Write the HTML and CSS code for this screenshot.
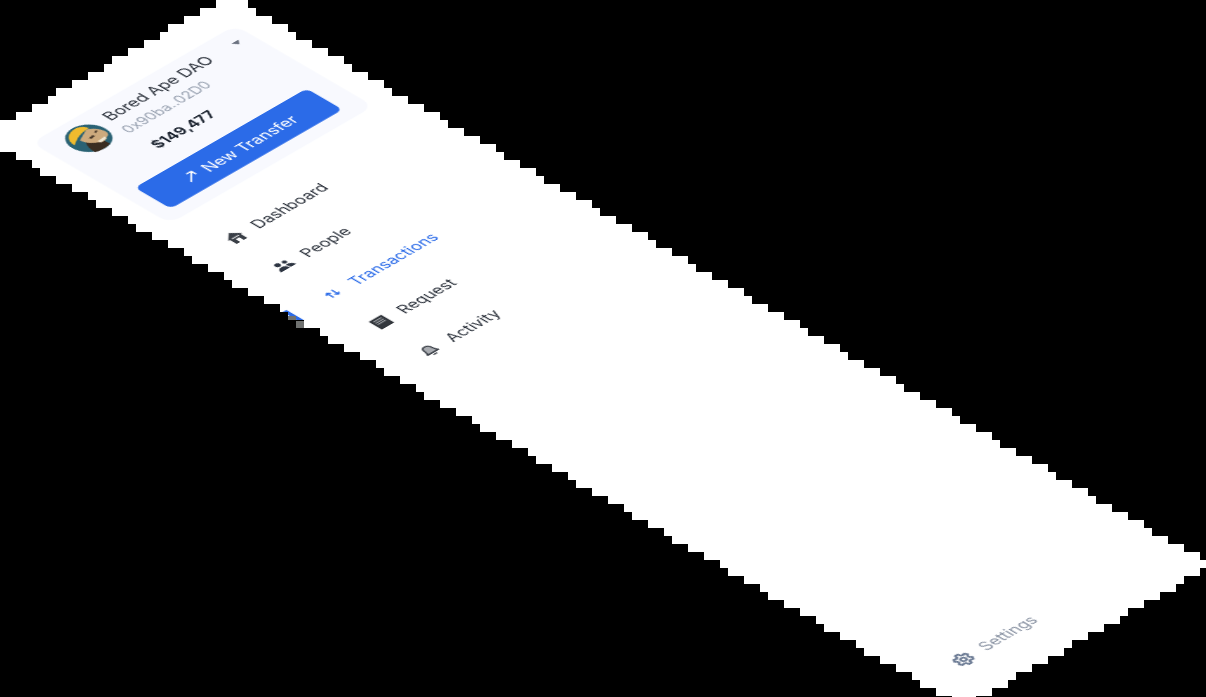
FILE: index.html
```html
<!DOCTYPE html>
<html lang="en">
<head>
    <meta charset="UTF-8">
    <meta name="viewport" content="width=device-width, initial-scale=1.0">
    <title>Sidebar</title>
    <link rel="stylesheet" href="styles.css">
</head>
<body>

    <div class="stage" id="stage">
        <aside class="sidebar">
            <span class="active-bar"></span>

            <div class="account">
                <span class="caret"></span>
                <div class="account-head">
                    <svg class="avatar" viewBox="0 0 38 38">
                        <circle cx="19" cy="19" r="19" fill="#2a6274"/>
                        <path d="M9 36c0-7 2-13 6-16l10 6 1 10c-5 2-12 2-17 0z" fill="#3a2e22"/>
                        <path d="M4 18C4 8 12 1 22 2c4 1 6 3 7 7-9 0-17 3-25 9z" fill="#f0bb2e"/>
                        <path d="M12 16l14-7c5 2 8 6 9 11 1 4-1 7-5 8-2 3-8 3-10 0-4-2-8-6-8-12z" fill="#cdaa7d"/>
                        <path d="M19 19l5-1 1 2-5 1zM28 16l3-1v2l-3 1z" fill="#4a3a2a"/>
                        <path d="M21 27l9-1-1 3-7 1z" fill="#efe6d2"/>
                    </svg>
                    <div class="account-info">
                        <p class="account-name">Bored Ape DAO</p>
                        <p class="account-address">0x90ba..02D0</p>
                        <p class="account-balance">$149,477</p>
                    </div>
                </div>
                <button class="transfer-btn">
                    <svg class="transfer-icon" viewBox="0 0 16 16" fill="none" stroke="#fff" stroke-width="1.5" stroke-linecap="round" stroke-linejoin="round">
                        <path d="M3 13L13 3M8 3h5v5"/>
                    </svg>
                    New Transfer
                </button>
            </div>

            <nav class="nav">
                <a class="nav-item">
                    <svg class="nav-icon" viewBox="0 0 20 20">
                        <path d="M2 10l8-7.500 8 7.500h-2v7.500H4V10z" fill="#3a3f47"/>
                        <path d="M8 17.500v-5h4v5zM6 9.500h8v1H6z" fill="#fff"/>
                    </svg>
                    Dashboard
                </a>
                <a class="nav-item">
                    <svg class="nav-icon" viewBox="0 0 20 20" fill="#2d3542">
                        <circle cx="6.500" cy="6.500" r="2.700"/>
                        <circle cx="13.500" cy="7" r="2.200"/>
                        <path d="M1.500 15.500c0-3 2-5 5-5s5 2 5 5z"/>
                        <path d="M12.500 15.500c0-2-.5-3.500-1.500-4.700 3.500-1 7 1 7.500 4.700z"/>
                    </svg>
                    People
                </a>
                <a class="nav-item nav-item-active">
                    <svg class="nav-icon" viewBox="0 0 20 20" fill="none" stroke="#2b6be8" stroke-width="1.500" stroke-linecap="round" stroke-linejoin="round">
                        <path d="M7 14V6.500M5 8.500l2-2 2 2M13 6.500V14M11 12l2 2 2-2"/>
                    </svg>
                    Transactions
                </a>
                <a class="nav-item">
                    <svg class="nav-icon" viewBox="0 0 20 20">
                        <path d="M3 3h14v15H3z" fill="#33373d"/>
                        <path d="M5.500 5.500h9v1h-9zM5.500 8h9v1h-9zM5.500 10.500h9v1h-9z" fill="#b9bcc0"/>
                    </svg>
                    Request
                </a>
                <a class="nav-item">
                    <svg class="nav-icon" viewBox="0 0 20 20" stroke="#3a3f47" stroke-width="1.500" stroke-linejoin="round" stroke-linecap="round">
                        <path d="M10 4c-2.700 0-4.200 2-4.200 4.800 0 2.800-.8 4-1.800 5.200h12c-1-1.200-1.800-2.400-1.800-5.200C14.200 6 12.700 4 10 4z" fill="#a9acb1"/>
                        <path d="M8.500 16.500h3" fill="none"/>
                    </svg>
                    Activity
                </a>
            </nav>

            <a class="nav-item settings">
                <svg class="nav-icon" viewBox="0 0 20 20" fill="none" stroke="#6d7c95" stroke-width="2.200" stroke-linejoin="round">
                    <path d="M8.500 2h3l.5 2.500 1.600.9 2.400-.8 1.500 2.600-1.900 1.700v1.800l1.900 1.700-1.500 2.600-2.400-.8-1.600.9-.5 2.500h-3l-.5-2.500-1.600-.9-2.400.8-1.500-2.600 1.900-1.700V9.100L2.500 7.400 4 4.800l2.400.8L8 4.500z"/>
                    <circle cx="10" cy="10" r="2.400"/>
                </svg>
                Settings
            </a>
        </aside>
    </div>
    <span class="edge-cell edge-cell-a"></span>
    <span class="edge-cell edge-cell-b"></span>

    <script>
        // the silhouette is the sidebar's parallelogram sampled on an 8px grid
        const CELL = 8;
        const corners = [[-19, 136], [228.5, -5], [1212, 565], [964, 708]];

        function inside(x, y) {
            return corners.every(function (p, i) {
                let q = corners[(i + 1) % 4];
                return (q[0] - p[0]) * (y - p[1]) - (q[1] - p[1]) * (x - p[0]) >= 0;
            });
        }

        let left = [];
        let right = [];
        for (let row = 0; row * CELL < 697; row++) {
            let y = row * CELL + CELL / 2;
            let cols = [];
            for (let col = 0; col * CELL < 1206; col++) {
                if (inside(col * CELL + CELL / 2, y)) cols.push(col);
            }
            if (!cols.length) continue;
            let top = row * CELL;
            let x0 = cols[0] * CELL;
            let x1 = (cols[cols.length - 1] + 1) * CELL;
            left.push(x0 + "px " + top + "px", x0 + "px " + (top + CELL) + "px");
            right.unshift(x1 + "px " + (top + CELL) + "px", x1 + "px " + top + "px");
        }
        document.getElementById("stage").style.clipPath = "polygon(" + left.concat(right).join(",") + ")";
    </script>

</body>
</html>
```

FILE: styles.css
```css
* {
    box-sizing: border-box;
}

html, body {
    margin: 0;
    height: 100%;
    background: #000;
    overflow: hidden;
}

.stage {
    position: relative;
    width: 1206px;
    height: 697px;
    overflow: hidden;
    background: #fff;
}

/* isometric view of a 280 x 1108 sidebar */
.sidebar {
    position: absolute;
    top: 0;
    left: 0;
    width: 280px;
    height: 1108px;
    padding: 35px 0 0 22px;
    display: flex;
    flex-direction: column;
    background: #fff;
    font-family: Inter, "Liberation Sans", sans-serif;
    font-size: 15.5px;
    color: #2a303a;
    transform-origin: 0 0;
    transform: matrix(0.8857, -0.5107, 0.8827, 0.5145, -19, 136);
    filter: blur(0.4px);
}

.active-bar {
    position: absolute;
    left: 0;
    top: 342px;
    width: 4px;
    height: 20px;
    background: #2b6be8;
}

/* half covered grid cells next to the active bar */
.edge-cell {
    position: absolute;
    width: 8px;
    background: #6f7170;
}

.edge-cell-a {
    left: 288px;
    top: 316px;
    height: 4px;
}

.edge-cell-b {
    left: 296px;
    top: 321px;
    height: 7px;
}

.account {
    position: relative;
    width: 230px;
    padding: 8px 18px 14px;
    border-radius: 12px;
    background: #f8f9fe;
}

.caret {
    position: absolute;
    top: 16px;
    right: 12px;
    border-left: 4px solid transparent;
    border-right: 4px solid transparent;
    border-top: 5px solid #6b7280;
}

.account-head {
    display: flex;
    gap: 10px;
}

.avatar {
    width: 38px;
    height: 38px;
    margin-top: 1px;
    flex-shrink: 0;
}

.account-info p {
    margin: 0;
    line-height: 20px;
    white-space: nowrap;
}

.account-name {
    font-size: 16px;
}

.account-address {
    margin: 3px 0 0 -2px !important;
    font-size: 14px;
    color: #9aa3b2;
}

.account-balance {
    margin-top: 12px !important;
    font-size: 14.5px;
    font-weight: 700;
    color: #1c2430;
}

.transfer-btn {
    display: flex;
    align-items: center;
    justify-content: center;
    gap: 6px;
    width: 194px;
    height: 41px;
    margin: 19px 0 0 -3px;
    border: none;
    border-radius: 6px;
    background: #2b6be8;
    color: #fff;
    font: inherit;
    font-size: 16px;
}

.transfer-icon {
    width: 16px;
    height: 16px;
}

.nav {
    display: flex;
    flex-direction: column;
    margin-top: 22.5px;
    padding-left: 14px;
}

.nav-item {
    display: flex;
    align-items: center;
    gap: 11px;
    height: 55px;
    white-space: nowrap;
}

.nav-item-active {
    color: #2b6be8;
}

.nav-icon {
    width: 20px;
    height: 20px;
    flex-shrink: 0;
}

.settings {
    margin-top: auto;
    margin-bottom: 16px;
    padding-left: 16px;
    color: #8a93a3;
}
```
